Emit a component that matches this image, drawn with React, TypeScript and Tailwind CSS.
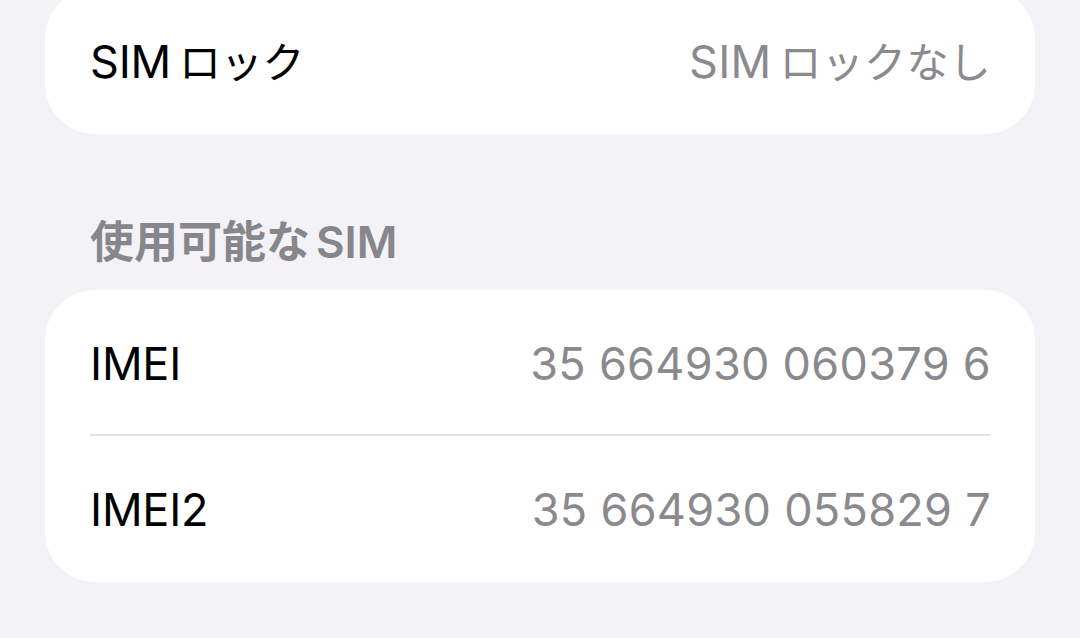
import React from "react";

const font = { fontFamily: 'Inter, "Noto Sans CJK JP", sans-serif' };

function Row({ label, value, divider }: { label: React.ReactNode; value: React.ReactNode; divider?: boolean }) {
  return (
    <div className="relative flex h-[146px] items-center justify-between pl-[45px] pr-[44px]">
      <span className="text-[45px] leading-none text-black tracking-[-0.2px]">{label}</span>
      <span className="text-[45px] leading-none text-[#8a8a8e] tracking-[0.3px]">{value}</span>
      {divider && <div className="absolute bottom-0 left-[45px] right-[44px] h-[2px] bg-[#e3e3e6]" />}
    </div>
  );
}

export default function App() {
  return (
    <div className="h-[638px] w-[1080px] overflow-hidden bg-[#f2f2f7]" style={font}>
      <div className="px-[45px]">
        <div className="-mt-[12px] rounded-[50px] bg-white">
          <Row
            label={<>SIM<span className="ml-[8px] text-[42px]">ロック</span></>}
            value={<>SIM<span className="ml-[8px] text-[42px]">ロックなし</span></>}
          />
        </div>
        <div className="flex h-[156px] items-end pb-[26px] pl-[45px]">
          <span className="text-[44px] font-semibold leading-none text-[#86868b]">
            使用可能な<span className="ml-[6px]">SIM</span>
          </span>
        </div>
        <div className="rounded-[50px] bg-white">
          <Row label="IMEI" value="35 664930 060379 6" divider />
          <Row label="IMEI2" value="35 664930 055829 7" />
        </div>
      </div>
    </div>
  );
}
